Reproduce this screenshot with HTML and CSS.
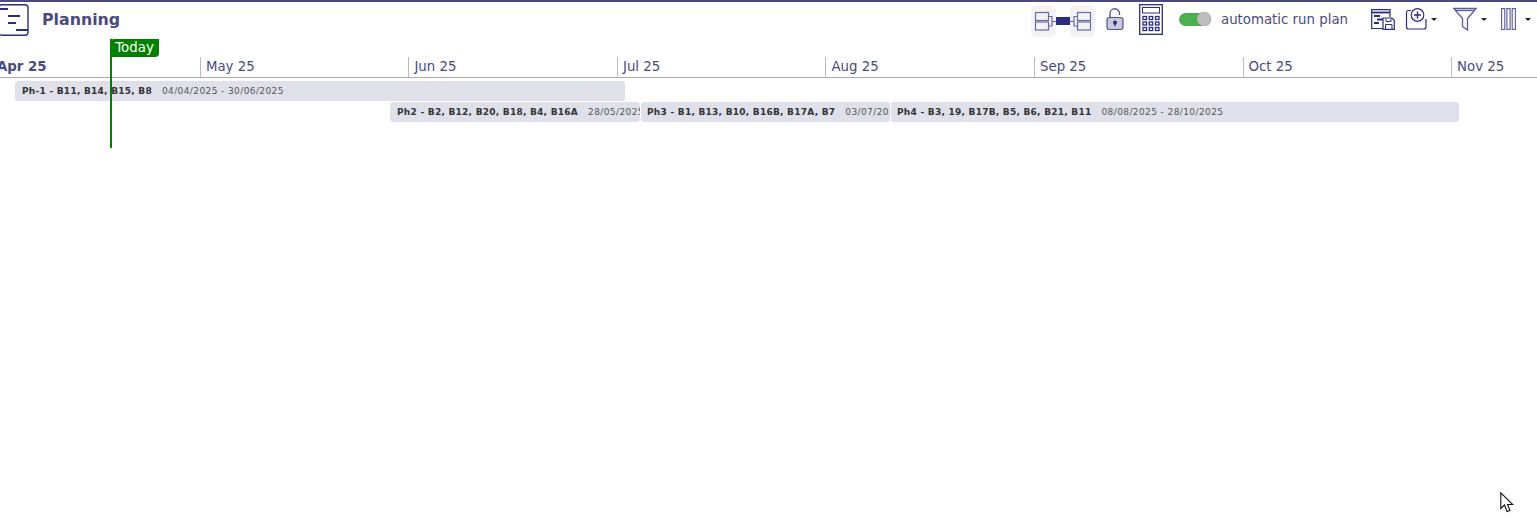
FILE: index.html
```html
<!DOCTYPE html>
<html lang="en">
<head>
<meta charset="utf-8">
<title>Planning</title>
<link rel="stylesheet" href="styles.css">
</head>
<body>
<header class="toolbar">
  <div class="title-group">
    <svg class="logo" width="30" height="32" viewBox="0 0 30 32" fill="none">
      <rect x="-1" y="0.700" width="29" height="30.600" rx="3" stroke="#2d2d80" stroke-width="1.400"/>
      <rect x="0" y="4" width="8" height="2" fill="#2d2d80"/>
      <rect x="8" y="11" width="12" height="2" fill="#2d2d80"/>
      <rect x="8" y="18" width="8" height="2" fill="#2d2d80"/>
      <rect x="16" y="25" width="12" height="2" fill="#2d2d80"/>
    </svg>
    <h1 class="title">Planning</h1>
  </div>
  <div class="tools">
    <div class="link-tool">
      <span class="tile">
        <svg width="25" height="31" viewBox="0 0 25 31" fill="none" stroke="#6a6aa0" stroke-width="1.200">
          <rect x="4.500" y="6.500" width="13" height="8"/><rect x="4.500" y="16" width="13" height="8"/>
          <path d="M17.500 10.500H21V20H17.500M21 15.500H25"/>
        </svg>
      </span>
      <span class="link-bar"></span>
      <span class="tile">
        <svg width="25" height="31" viewBox="0 0 25 31" fill="none" stroke="#6a6aa0" stroke-width="1.200">
          <rect x="7.500" y="6.500" width="13" height="8"/><rect x="7.500" y="16" width="13" height="8"/>
          <path d="M7.500 10.500H4V20H7.500M4 15.500H0"/>
        </svg>
      </span>
    </div>
    <svg class="lock" width="18" height="22" viewBox="0 0 18 22" fill="none">
      <path d="M4 10V5.500a4.500 4.500 0 0 1 9.500 0V7" stroke="#55558c" stroke-width="1.400"/>
      <rect x="1" y="9.500" width="16" height="12" rx="2.500" fill="#c8c8d8" stroke="#55558c" stroke-width="1.200"/>
      <circle cx="9" cy="14.500" r="2" fill="#2d2d80"/><rect x="8.300" y="14.500" width="1.400" height="3.500" fill="#2d2d80"/>
    </svg>
    <svg class="calc" width="24" height="31" viewBox="0 0 24 31" fill="none" stroke="#2d2d80">
      <rect x="0.700" y="0.700" width="22.600" height="29.600" stroke-width="1.300"/>
      <rect x="3.500" y="3.500" width="17" height="5.500"/>
      <g stroke-width="1.300">
        <rect x="4" y="12.500" width="3.500" height="3"/><rect x="10.200" y="12.500" width="3.500" height="3"/><rect x="16.500" y="12.500" width="3.500" height="3"/>
        <rect x="4" y="18" width="3.500" height="3"/><rect x="10.200" y="18" width="3.500" height="3"/><rect x="16.500" y="18" width="3.500" height="3"/>
        <rect x="4" y="23.500" width="3.500" height="3"/><rect x="10.200" y="23.500" width="3.500" height="3"/><rect x="16.500" y="23.500" width="3.500" height="3"/>
      </g>
    </svg>
    <div class="switch-group">
      <span class="switch"><span class="knob"></span></span>
      <span class="switch-label">automatic run plan</span>
    </div>
    <svg class="save" width="24" height="21" viewBox="0 0 24 21" fill="none" stroke="#2d2d80">
      <path d="M13 19.500H0.700V0.700H19V8" stroke-width="1.200"/>
      <path d="M1 3.500H19" stroke-width="1.800"/>
      <path d="M3 7H9M6 10.500H13M3 14H8" stroke-width="1.800"/>
      <path d="M12 9H21L23.300 11.500V20.300H12Z" fill="#fff" stroke-width="1.200"/>
      <path d="M15 9.500V12.500H20V9.500M14.500 20V15.500H21V20" stroke-width="1"/>
    </svg>
    <div class="drop drop-add">
      <svg width="23" height="24" viewBox="0 0 23 24" fill="none" stroke="#2d2d80" stroke-width="1.200">
        <path d="M6 3.500H3.500A2 2 0 0 0 1.500 5.500V20A2 2 0 0 0 3.500 22H19A2 2 0 0 0 21 20V12"/>
        <circle cx="12.500" cy="8" r="6.300" fill="#fff"/>
        <path d="M12.500 4.500V11.500M9 8H16" stroke-width="1.400"/>
      </svg>
      <span class="caret"></span>
    </div>
    <div class="drop drop-filter">
      <svg width="24" height="24" viewBox="0 0 24 24" fill="none" stroke="#5a5a98" stroke-width="1.300">
        <path d="M.8 1.500H23.200L14.500 11.500V23L9.500 19.500V11.500Z"/>
        <path d="M3 3.500H21"/>
      </svg>
      <span class="caret"></span>
    </div>
    <div class="drop drop-columns">
      <svg width="15" height="22" viewBox="0 0 15 22" fill="none" stroke="#5a5a98" stroke-width="1.100">
        <rect x="0.600" y="0.600" width="3.200" height="20.800"/><rect x="5.900" y="0.600" width="3.200" height="20.800"/><rect x="11.200" y="0.600" width="3.200" height="20.800"/>
      </svg>
      <span class="caret"></span>
    </div>
  </div>
</header>
<main class="gantt">
  <div class="months">
    <div class="month month-current">Apr 25</div>
    <div class="month">May 25</div>
    <div class="month">Jun 25</div>
    <div class="month">Jul 25</div>
    <div class="month">Aug 25</div>
    <div class="month">Sep 25</div>
    <div class="month">Oct 25</div>
    <div class="month">Nov 25</div>
  </div>
  <div class="bar bar-1"><b>Ph-1 - B11, B14, B15, B8</b><span>04/04/2025 - 30/06/2025</span></div>
  <div class="bar bar-2"><b>Ph2 - B2, B12, B20, B18, B4, B16A</b><span>28/05/2025 - 03/07/2025</span></div>
  <div class="bar bar-3"><b>Ph3 - B1, B13, B10, B16B, B17A, B7</b><span>03/07/2025 - 08/08/2025</span></div>
  <div class="bar bar-4"><b>Ph4 - B3, 19, B17B, B5, B6, B21, B11</b><span>08/08/2025 - 28/10/2025</span></div>
  <div class="today"><span class="today-flag">Today</span></div>
</main>
<svg class="cursor" width="14" height="21" viewBox="0 0 14 21" fill="#fff" stroke="#111" stroke-width="1.100">
  <path d="M.8.800V16.500L4.500 13 7 19.500 10 18.500 7.500 12.500H12.800Z"/>
</svg>
</body>
</html>
```
FILE: styles.css
```css
* { box-sizing: border-box; }
html, body { margin: 0; height: 100%; }
body {
  position: relative;
  overflow: hidden;
  background: #fff;
  font-family: "DejaVu Sans", sans-serif;
  color: #4a4a80;
  border-top: 2px solid #4a4a7c;
}
.toolbar {
  display: flex;
  justify-content: space-between;
  align-items: center;
  height: 36px;
}
.title-group { display: flex; align-items: center; }
.logo { display: block; }
.title {
  margin: 0 0 2px 12px;
  font-size: 15.800px;
  font-weight: 700;
  color: #4a4a80;
}
.tools { display: flex; align-items: center; padding-right: 6px; padding-bottom: 2px; }
.link-tool { display: flex; align-items: center; margin-top: 4px; margin-right: 11px; }
.tile {
  display: flex;
  width: 25px;
  height: 31px;
  background: #f3f3f6;
  border-radius: 5px;
}
.link-bar { width: 14px; height: 8px; margin: 0 2px; background: #2d2d80; position: relative; }
.link-tool .tile:first-child { margin-right: -2px; }
.link-tool .tile:last-child { margin-left: -2px; }
.lock { display: block; margin-right: 15px; }
.calc { display: block; margin-right: 16px; }
.switch-group { display: flex; align-items: center; margin-right: 23px; }
.switch {
  display: block;
  position: relative;
  width: 32px;
  height: 13px;
  border-radius: 7px;
  background: #4caf50;
}
.knob {
  position: absolute;
  right: 0;
  top: -0.500px;
  width: 14px;
  height: 14px;
  border-radius: 50%;
  background: #bdbdbd;
  box-shadow: 0 0 1px #777;
}
.switch-label { margin-left: 10px; font-size: 13.330px; }
.save { display: block; margin-right: 10px; }
.drop { display: flex; align-items: center; }
.drop-add { margin-right: 16px; }
.drop-filter { margin-right: 14px; }
.caret {
  width: 0;
  height: 0;
  margin-left: 3px;
  border: 3.500px solid transparent;
  border-top-color: #222;
  border-bottom: 0;
}
.drop-filter .caret { margin-left: 4px; }
.drop-columns .caret { margin-left: 9px; }
.gantt { position: relative; height: 487px; }
.months {
  display: flex;
  height: 40px;
  padding-top: 19px;
  margin-left: -8.600px;
  border-bottom: 1px solid #aaa;
  font-size: 13.330px;
}
.month {
  flex: 0 0 208.520px;
  padding-left: 5px;
  line-height: 20px;
  border-left: 1px solid #bbb;
  white-space: nowrap;
}
.month-current { font-weight: 700; border-left: 0; padding-left: 5.600px; }
.bar {
  position: absolute;
  display: flex;
  align-items: center;
  gap: 10px;
  height: 20px;
  padding-left: 7px;
  overflow: hidden;
  border-radius: 3px;
  background: #e0e0ea;
  font-size: 9px;
  color: #555;
  white-space: nowrap;
}
.bar b { color: #333; letter-spacing: 0.250px; }
.bar span { letter-spacing: 0.400px; }
.bar-1 { left: 15px; top: 43px; width: 610px; }
.bar-2 { left: 390px; top: 64px; width: 250px; }
.bar-3 { left: 640px; top: 64px; width: 250px; border-left: 1px solid #fff; padding-left: 6px; }
.bar-4 { left: 890px; top: 64px; width: 569px; border-left: 1px solid #fff; padding-left: 6px; }
.today {
  position: absolute;
  left: 110px;
  top: 1px;
  width: 2px;
  height: 109px;
  background: #008000;
}
.today-flag {
  position: absolute;
  left: 0;
  top: 0;
  width: 49px;
  height: 18px;
  border-radius: 4px 0 4px 0;
  background: #008000;
  color: #fff;
  font-size: 13.330px;
  line-height: 17px;
  text-align: center;
}
.cursor { position: absolute; left: 1500px; top: 490px; }
```
